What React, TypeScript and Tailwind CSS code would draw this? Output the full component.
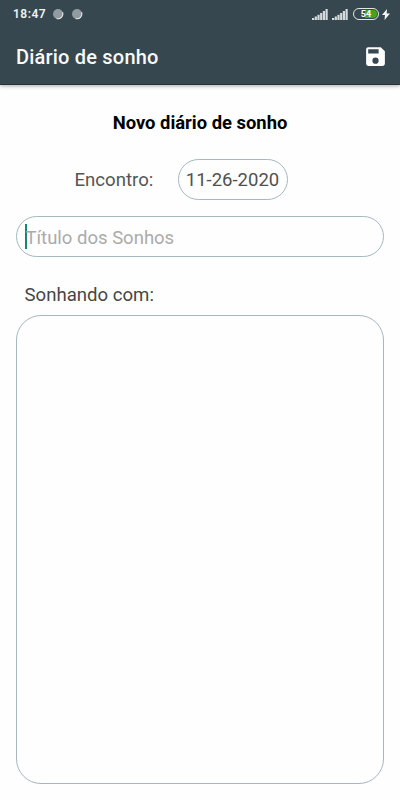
function Signal() {
  return (
    <svg width="16" height="11" viewBox="0 0 16 11" fill="#d5dbde">
      <rect x="0" y="9" width="2.2" height="2" />
      <rect x="2.7" y="7.5" width="2.2" height="3.5" />
      <rect x="5.4" y="5.8" width="2.2" height="5.2" />
      <rect x="8.1" y="4" width="2.2" height="7" />
      <rect x="10.8" y="2" width="2.2" height="9" />
      <rect x="13.5" y="0" width="2.2" height="11" />
    </svg>
  );
}

function Dot() {
  return (
    <svg width="12" height="12" viewBox="0 0 12 12">
      <circle cx="6" cy="6" r="5" fill="#929ca0" />
      <path d="M10.5 4.2A4.8 4.8 0 0 1 4.5 10.5" fill="none" stroke="#e4e8e9" strokeWidth="1.1" />
    </svg>
  );
}

export default function App() {
  return (
    <div className="flex h-[800px] w-[400px] flex-col overflow-hidden bg-[#fefefe] font-[Roboto,sans-serif]">
      <header className="h-[85px] shrink-0 border-b border-[#25323a] bg-[#37474f] shadow-[0_1px_4px_rgba(40,30,60,0.4)]">
        <div className="flex h-7 items-center pl-[13px] pr-[10px]">
          <span className="w-[39px] whitespace-nowrap text-[12px] font-semibold leading-7 tracking-[0.5px] text-[#eef1f2]">18:47</span>
          <div className="flex gap-[7px]">
            <Dot />
            <Dot />
          </div>
          <div className="ml-auto flex items-center">
            <Signal />
            <div className="ml-[4px] mr-[5px]"><Signal /></div>
            <div className="flex h-[12px] w-[26px] items-center rounded-full border-[1.5px] border-[#e1e7e5] p-px">
              <div className="flex h-full w-full items-center justify-center rounded-full bg-[linear-gradient(90deg,#37474f_44%,#43a51d_44%)] text-[9px] font-bold leading-none text-white">54</div>
            </div>
            <svg className="ml-[3px]" width="8" height="11" viewBox="0 0 8 11" fill="#f5f7f7">
              <path d="M5 0 0 6h3L2.5 11 8 4.5H4.7Z" />
            </svg>
          </div>
        </div>
        <div className="flex h-[56px] items-center justify-between pl-4 pr-[12px] pt-px">
          <h1 className="pt-px text-[20px] font-medium leading-6 tracking-[0.2px] text-[#f8fafa]">Diário de sonho</h1>
          <svg width="25" height="25" viewBox="0 0 24 24" fill="white">
            <path d="M17 3H5a2 2 0 0 0-2 2v14a2 2 0 0 0 2 2h14a2 2 0 0 0 2-2V7l-4-4Zm-5 16a3 3 0 1 1 0-6 3 3 0 0 1 0 6Zm3-10H5V5h10v4Z" />
          </svg>
        </div>
      </header>
      <main className="flex flex-1 flex-col px-4 pb-4">
        <h2 className="mt-[26px] text-center text-[18.4px] font-bold leading-6 text-black">Novo diário de sonho</h2>
        <div className="mt-[24px] flex h-[41px] items-center pl-[58.5px]">
          <label className="w-[103px] pt-[3px] text-[18.6px] text-[#555]">Encontro:</label>
          <div className="flex h-[41px] w-[110px] items-center justify-center rounded-full border border-[#a5b7bf] pt-[3px] text-[18.5px] text-[#505050]">11-26-2020</div>
        </div>
        <div className="mt-[16px] flex h-[41px] items-center rounded-full border border-[#a5b7bf] pl-[7.5px]">
          <span className="h-[25px] w-[2px] bg-[#168777]" />
          <span className="-ml-px pt-[4px] text-[18.5px] text-[#ababab]">Título dos Sonhos</span>
        </div>
        <label className="mt-[26px] block pl-[8.5px] text-[18.6px] leading-6 text-[#464646]">Sonhando com:</label>
        <div className="mt-[8px] flex-1 rounded-[25px] border border-[#a5b7bf]" />
      </main>
    </div>
  );
}
